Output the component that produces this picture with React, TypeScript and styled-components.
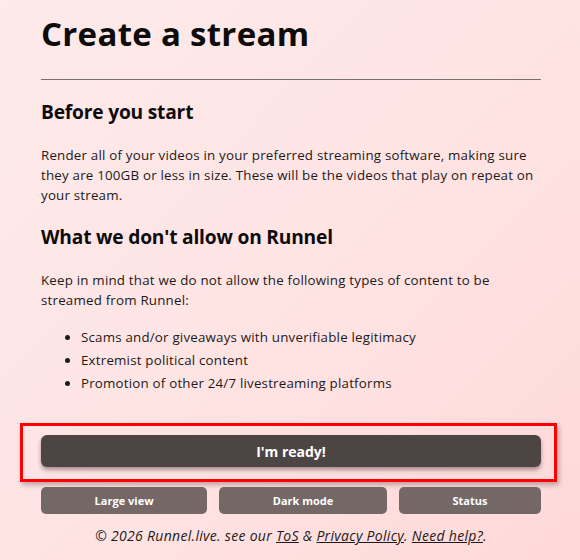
import React from "react";
import styled, { createGlobalStyle } from "styled-components";

const GlobalStyle = createGlobalStyle`
  html, body {
    margin: 0;
    min-height: 100%;
  }
  body {
    min-height: 100vh;
    background: linear-gradient(135deg, #fdeaea 0%, #ffe3e3 55%, #ffd8d8 100%);
    font-family: "Open Sans", "Liberation Sans", sans-serif;
    color: #1c1a1a;
  }
`;

const Page = styled.main`
  width: 500px;
  margin-left: 41px;
  padding-top: 14px;
  padding-bottom: 20px;
`;

const Title = styled.h1`
  margin: 0;
  font-size: 33px;
  line-height: 40px;
  font-weight: 700;
  color: #0d0b0b;
  letter-spacing: 0.3px;
`;

const Divider = styled.hr`
  margin: 25px 0 0;
  border: 0;
  height: 1px;
  background: #7a6f6f;
`;

const Heading = styled.h2`
  margin: 18px 0 19px;
  font-size: 19.2px;
  line-height: 28px;
  font-weight: 700;
  color: #0d0b0b;
  letter-spacing: -0.2px;
`;

const Text = styled.p`
  margin: 0;
  font-size: 13.33px;
  line-height: 20px;
  letter-spacing: 0.2px;
`;

const RuleList = styled.ul`
  margin: 16px 0 0;
  padding-left: 40px;
  font-size: 13.33px;
  line-height: 23px;
  letter-spacing: 0.2px;
`;

const Highlight = styled.div`
  margin: 28px -16px 0 -21px;
  padding: 9px 13px 12px 18px;
  border: 3px solid #ff0000;
  box-shadow: 2px 3px 5px rgba(80, 40, 40, 0.35);
`;

const ReadyButton = styled.button`
  display: block;
  width: 100%;
  height: 32px;
  border: 0;
  border-radius: 6px;
  background: #4d4544;
  color: #ffffff;
  font-family: inherit;
  font-size: 14px;
  font-weight: 700;
  box-shadow: 0 3px 4px rgba(40, 20, 20, 0.4);
  cursor: pointer;
`;

const ButtonRow = styled.div`
  display: flex;
  gap: 12px;
  margin-top: 5px;
`;

const SmallButton = styled.button`
  flex: 1 1 auto;
  height: 27px;
  border: 0;
  border-radius: 5px;
  background: #736866;
  color: #ffffff;
  font-family: inherit;
  font-size: 11px;
  font-weight: 700;
  cursor: pointer;
`;

const Footer = styled.footer`
  margin-top: 12px;
  text-align: center;
  font-size: 14px;
  line-height: 20px;
  font-style: italic;
  letter-spacing: 0.3px;
`;

const FooterLink = styled.a`
  color: inherit;
  text-decoration: underline;
`;

const rules = [
  "Scams and/or giveaways with unverifiable legitimacy",
  "Extremist political content",
  "Promotion of other 24/7 livestreaming platforms",
];

export default function App() {
  return (
    <>
      <GlobalStyle />
      <Page>
        <Title>Create a stream</Title>
        <Divider />
        <Heading>Before you start</Heading>
        <Text>
          Render all of your videos in your preferred streaming software, making sure
          they are 100GB or less in size. These will be the videos that play on repeat on
          your stream.
        </Text>
        <Heading>What we don't allow on Runnel</Heading>
        <Text>
          Keep in mind that we do not allow the following types of content to be
          streamed from Runnel:
        </Text>
        <RuleList>
          {rules.map((rule) => (
            <li key={rule}>{rule}</li>
          ))}
        </RuleList>
        <Highlight>
          <ReadyButton>I'm ready!</ReadyButton>
        </Highlight>
        <ButtonRow>
          <SmallButton>Large view</SmallButton>
          <SmallButton>Dark mode</SmallButton>
          <SmallButton>Status</SmallButton>
        </ButtonRow>
        <Footer>
          © 2026 Runnel.live. see our <FooterLink href="#">ToS</FooterLink> &amp;{" "}
          <FooterLink href="#">Privacy Policy</FooterLink>.{" "}
          <FooterLink href="#">Need help?</FooterLink>.
        </Footer>
      </Page>
    </>
  );
}
